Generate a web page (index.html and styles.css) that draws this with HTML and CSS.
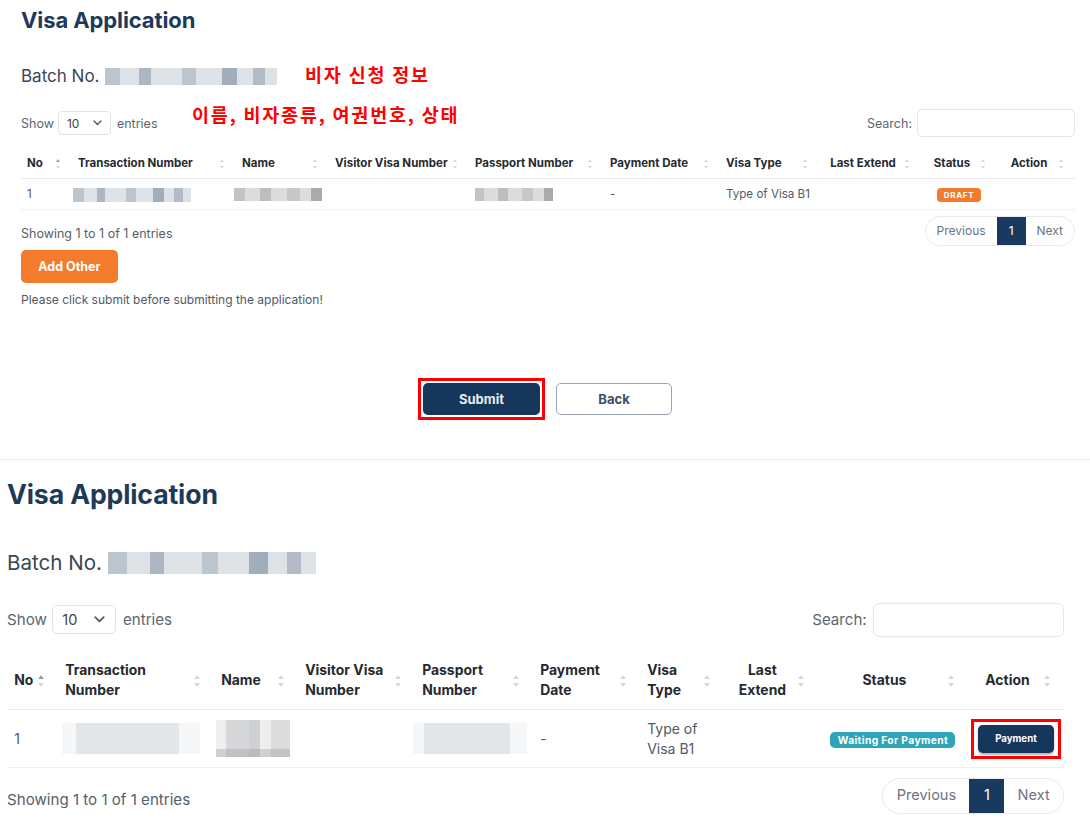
FILE: index.html
```html
<!DOCTYPE html>
<html lang="en">
<head>
<meta charset="utf-8">
<title>Visa Application</title>
<link rel="stylesheet" href="styles.css">
</head>
<body>
<section class="panel panel-draft">
  <h1 class="title">Visa Application</h1>
  <div class="batch">Batch No. <span class="redact redact-batch"></span></div>
  <div class="note note-1">비자 신청 정보</div>
  <div class="note note-2">이름, 비자종류, 여권번호, 상태</div>

  <div class="dt-top">
    <div class="dt-length">Show <span class="select">10 <svg class="chev" width="9" height="6" viewBox="0 0 9 6"><path d="M1 1l3.5 3.5L8 1" fill="none" stroke="#555" stroke-width="1.4" stroke-linecap="round" stroke-linejoin="round"/></svg></span> entries</div>
    <div class="dt-search">Search: <span class="search-input"></span></div>
  </div>

  <table class="dt">
    <colgroup>
      <col class="a-no"><col class="a-tx"><col class="a-nm"><col class="a-vv"><col class="a-pp"><col class="a-pd"><col class="a-vt"><col class="a-le"><col class="a-st"><col class="a-ac">
    </colgroup>
    <thead>
      <tr>
        <th>No<span class="sort asc"></span></th>
        <th>Transaction Number<span class="sort"></span></th>
        <th>Name<span class="sort"></span></th>
        <th>Visitor Visa Number<span class="sort"></span></th>
        <th>Passport Number<span class="sort"></span></th>
        <th>Payment Date<span class="sort"></span></th>
        <th>Visa Type<span class="sort"></span></th>
        <th class="c">Last Extend<span class="sort"></span></th>
        <th class="c">Status<span class="sort"></span></th>
        <th class="c">Action<span class="sort"></span></th>
      </tr>
    </thead>
    <tbody>
      <tr>
        <td>1</td>
        <td><span class="redact redact-a-tx"></span></td>
        <td><span class="redact gray redact-a-nm"></span></td>
        <td></td>
        <td><span class="redact gray redact-a-pp"></span></td>
        <td>-</td>
        <td>Type of Visa B1</td>
        <td></td>
        <td class="c"><span class="badge badge-draft">DRAFT</span></td>
        <td></td>
      </tr>
    </tbody>
  </table>

  <div class="dt-bottom">
    <div class="dt-info">Showing 1 to 1 of 1 entries</div>
    <div class="pager"><span class="pg">Previous</span><span class="pg active">1</span><span class="pg">Next</span></div>
  </div>

  <button class="btn btn-orange">Add Other</button>
  <p class="hint">Please click submit before submitting the application!</p>

  <div class="actions">
    <span class="highlight"><button class="btn btn-navy btn-lg">Submit</button></span>
    <button class="btn btn-outline btn-lg">Back</button>
  </div>
</section>

<section class="panel panel-pay">
  <div class="wrap">
    <h1 class="title">Visa Application</h1>
    <div class="batch">Batch No. <span class="redact redact-batch"></span></div>

    <div class="dt-top">
      <div class="dt-length">Show <span class="select">10 <svg class="chev" width="9" height="6" viewBox="0 0 9 6"><path d="M1 1l3.5 3.5L8 1" fill="none" stroke="#555" stroke-width="1.4" stroke-linecap="round" stroke-linejoin="round"/></svg></span> entries</div>
      <div class="dt-search">Search: <span class="search-input"></span></div>
    </div>

    <table class="dt dt-b">
      <colgroup>
        <col class="b-no"><col class="b-tx"><col class="b-nm"><col class="b-vv"><col class="b-pp"><col class="b-pd"><col class="b-vt"><col class="b-le"><col class="b-st"><col class="b-ac">
      </colgroup>
      <thead>
        <tr>
          <th>No<span class="sort asc"></span></th>
          <th>Transaction<br>Number<span class="sort"></span></th>
          <th>Name<span class="sort"></span></th>
          <th>Visitor Visa<br>Number<span class="sort"></span></th>
          <th>Passport<br>Number<span class="sort"></span></th>
          <th>Payment<br>Date<span class="sort"></span></th>
          <th>Visa<br>Type<span class="sort"></span></th>
          <th class="c">Last<br>Extend<span class="sort"></span></th>
          <th class="c">Status<span class="sort"></span></th>
          <th class="c">Action<span class="sort"></span></th>
        </tr>
      </thead>
      <tbody>
        <tr>
          <td>1</td>
          <td><span class="redact soft redact-b-tx"></span></td>
          <td><span class="redact blocky redact-b-nm"></span></td>
          <td></td>
          <td><span class="redact soft redact-b-pp"></span></td>
          <td>-</td>
          <td>Type of Visa B1</td>
          <td></td>
          <td class="c"><span class="badge badge-info">Waiting For Payment</span></td>
          <td class="c"><span class="highlight highlight-sm"><button class="btn btn-navy btn-xs">Payment</button></span></td>
        </tr>
      </tbody>
    </table>

    <div class="dt-bottom dt-bottom-b">
      <div class="dt-info">Showing 1 to 1 of 1 entries</div>
      <div class="pager"><span class="pg">Previous</span><span class="pg active">1</span><span class="pg">Next</span></div>
    </div>
  </div>
</section>
</body>
</html>
```

FILE: styles.css
```css
* { box-sizing: border-box; }

html, body {
  margin: 0;
  background: #ffffff;
}

body {
  width: 1090px;
  height: 828px;
  overflow: hidden;
  font-family: Inter, "Noto Sans", "Liberation Sans", sans-serif;
  color: #4f5a66;
}

.panel { position: relative; }

.panel-draft {
  height: 460px;
  padding: 7px 15px 0 21px;
  border-bottom: 1px solid #ececec;
  box-shadow: 0 2px 4px rgba(0, 0, 0, 0.03);
}

.panel-pay {
  zoom: 1.21;
  padding: 16px 0 0 5.8px;
}

.panel-pay .wrap { width: 873.5px; }

.title {
  margin: 0;
  font-size: 22px;
  line-height: 26px;
  font-weight: 700;
  color: #1d3a59;
  letter-spacing: -0.1px;
}

.batch {
  margin-top: 32px;
  font-size: 17px;
  line-height: 22px;
  color: #3b4754;
  display: flex;
  align-items: center;
  gap: 5px;
}

/* redacted (blurred) values */
.redact {
  display: inline-block;
  vertical-align: middle;
  background-color: #dde2e7;
  background-image: linear-gradient(90deg,
    rgba(110,130,150,.30) 0 9%, transparent 9% 20%,
    rgba(110,130,150,.45) 20% 27%, transparent 27% 45%,
    rgba(110,130,150,.30) 45% 53%, transparent 53% 68%,
    rgba(110,130,150,.55) 68% 77%, transparent 77% 86%,
    rgba(110,130,150,.40) 86% 93%, transparent 93%);
}
.redact.gray {
  background-color: #dcdcdc;
  background-image: linear-gradient(90deg,
    rgba(120,120,120,.25) 0 12%, transparent 12% 30%,
    rgba(120,120,120,.30) 30% 42%, transparent 42% 60%,
    rgba(120,120,120,.20) 60% 75%, transparent 75% 88%,
    rgba(110,110,110,.45) 88% 100%);
}
.redact.soft {
  background-color: #eceef0;
  background-image: linear-gradient(90deg,
    rgba(255,255,255,.5) 0 10%, rgba(200,205,210,.25) 10% 85%, rgba(255,255,255,.5) 85%);
  filter: blur(0.6px);
}
.redact.blocky {
  background-color: #eeeeef;
  background-image:
    linear-gradient(180deg, transparent 0 78%, rgba(150,150,155,.35) 78%),
    linear-gradient(90deg, transparent 0 14%, #d6d7d8 14% 44%, #cfd0d1 44% 60%, transparent 60% 74%, #dcdcdd 74% 100%);
}

.redact-batch { width: 172px; height: 17px; }
.panel-pay .redact-batch { height: 18px; }
.redact-a-tx { width: 118px; height: 14px; margin-left: -5px; }
.redact-a-nm { width: 88px; height: 13px; margin-left: -8px; }
.redact-a-pp { width: 78px; height: 13px; }
.redact-b-tx { width: 114px; height: 25px; margin-left: -2.5px; }
.redact-b-nm { width: 61px; height: 31px; margin-left: -4px; }
.redact-b-pp { width: 95px; height: 25px; margin-left: -8px; }

/* annotations */
.note {
  position: absolute;
  font-family: "Noto Sans CJK KR", "Noto Sans", sans-serif;
  font-weight: 700;
  font-size: 18.5px;
  line-height: 24px;
  letter-spacing: 1.8px;
  color: #ff0000;
  white-space: nowrap;
}
.note-1 { left: 305px; top: 62px; }
.note-2 { left: 192px; top: 102px; }

/* datatable controls */
.dt-top {
  margin-top: 22px;
  height: 28px;
  display: flex;
  justify-content: space-between;
  align-items: center;
  font-size: 12.5px;
  color: #5b6671;
}

.dt-length, .dt-search {
  display: flex;
  align-items: center;
}

.select {
  width: 53px;
  height: 24px;
  margin: 0 6px 0 4px;
  padding: 0 8px 0 8px;
  border: 1px solid #dfe3e7;
  border-radius: 4px;
  display: inline-flex;
  align-items: center;
  justify-content: space-between;
  font-size: 12px;
  color: #444;
}

.search-input {
  width: 158px;
  height: 28px;
  margin-left: 5px;
  border: 1px solid #e3e6ea;
  border-radius: 5px;
  background: #fff;
}

/* table */
.dt {
  margin-top: 12px;
  width: 1054px;
  table-layout: fixed;
  border-collapse: collapse;
}
.dt-b { width: 873.5px; margin-top: 13px; }

.a-no { width: 51px; } .a-tx { width: 164px; } .a-nm { width: 93px; }
.a-vv { width: 140px; } .a-pp { width: 135px; } .a-pd { width: 116px; }
.a-vt { width: 99px; } .a-le { width: 102px; } .a-st { width: 76px; } .a-ac { width: 78px; }

.b-no { width: 42.1px; } .b-tx { width: 128.9px; } .b-nm { width: 69.4px; }
.b-vv { width: 96.7px; } .b-pp { width: 97.5px; } .b-pd { width: 88.4px; }
.b-vt { width: 69.4px; } .b-le { width: 77.7px; } .b-st { width: 124px; } .b-ac { width: 79.3px; }

.dt th {
  position: relative;
  padding: 7px 20px 7px 6px;
  font-size: 11.5px;
  line-height: 15px;
  font-weight: 700;
  color: #262a2f;
  text-align: left;
  white-space: nowrap;
  vertical-align: middle;
  border-bottom: 1px solid #e7eaed;
}
.dt-b th { line-height: 16px; padding-top: 7.5px; padding-bottom: 7.5px; }

.dt td {
  padding: 7px 6px;
  font-size: 11.6px;
  line-height: 16px;
  color: #505b66;
  vertical-align: middle;
  border-bottom: 1px solid #eef0f2;
}

.dt .c { text-align: center; }

.sort {
  position: absolute;
  right: 11px;
  top: 50%;
  width: 6px;
  height: 10px;
  margin-top: -5px;
}
.sort::before, .sort::after {
  content: "";
  position: absolute;
  left: 0.5px;
  border-left: 2.5px solid transparent;
  border-right: 2.5px solid transparent;
}
.sort::before { top: 0; border-bottom: 3.5px solid #d5d8dc; }
.sort::after { bottom: 0; border-top: 3.5px solid #d5d8dc; }
.sort.asc::before { border-bottom-color: #9aa1a8; }

.badge {
  display: inline-block;
  font-weight: 700;
  color: #fff;
  border-radius: 4px;
  vertical-align: middle;
}
.badge-draft {
  background: #f37a2b;
  font-size: 8px;
  line-height: 10px;
  padding: 2px 7px;
  letter-spacing: 0.7px;
}
.badge-info {
  background: #2ba5b7;
  font-size: 8.5px;
  line-height: 10px;
  padding: 2px 6px;
  letter-spacing: 0.3px;
}

/* bottom of table */
.dt-bottom {
  margin-top: 6px;
  display: flex;
  justify-content: space-between;
  align-items: flex-start;
}
.dt-bottom-b { margin-top: 8px; }

.dt-info {
  padding-top: 10px;
  font-size: 12.5px;
  line-height: 16px;
  color: #55606b;
}

.pager {
  display: flex;
  height: 30px;
  border: 1px solid #e8eaed;
  border-radius: 15px;
  overflow: hidden;
  font-size: 12px;
  color: #6b7580;
}
.pg {
  padding: 0 11px;
  line-height: 28px;
}
.pg.active {
  padding: 0 12px;
  background: #173a5e;
  color: #fff;
}

/* buttons */
.btn {
  border: 0;
  font-family: inherit;
  font-weight: 700;
  cursor: pointer;
}
.btn-orange {
  display: block;
  margin-top: 4px;
  height: 33px;
  width: 97px;
  padding: 0;
  background: #f47b2b;
  color: #fff;
  font-size: 12.5px;
  border-radius: 5px;
}
.btn-navy {
  background: #15375c;
  color: #e8ebef;
}
.btn-lg {
  height: 32px;
  font-size: 13px;
  border-radius: 5px;
}
.highlight .btn-lg { width: 117px; }
.btn-outline {
  width: 116px;
  background: #fff;
  border: 1px solid #9ba4ae;
  color: #3c4f63;
}
.btn-xs {
  height: 23px;
  padding: 0 14px;
  font-size: 8px;
  color: #fff;
  border-radius: 4px;
  box-shadow: 0 1px 2px rgba(0, 0, 0, 0.3);
}

.highlight {
  display: inline-flex;
  border: 3px solid #ff0000;
  padding: 2px;
}
.highlight-sm {
  border-width: 2.5px;
  padding: 2.5px 3.5px;
  margin: 0 -4px;
  vertical-align: middle;
}

.hint {
  margin: 9px 0 0;
  font-size: 12px;
  line-height: 16px;
  color: #4f5a66;
}

.actions {
  margin-top: 70px;
  padding-right: 6px;
  display: flex;
  justify-content: center;
  align-items: center;
  gap: 11px;
}
```
